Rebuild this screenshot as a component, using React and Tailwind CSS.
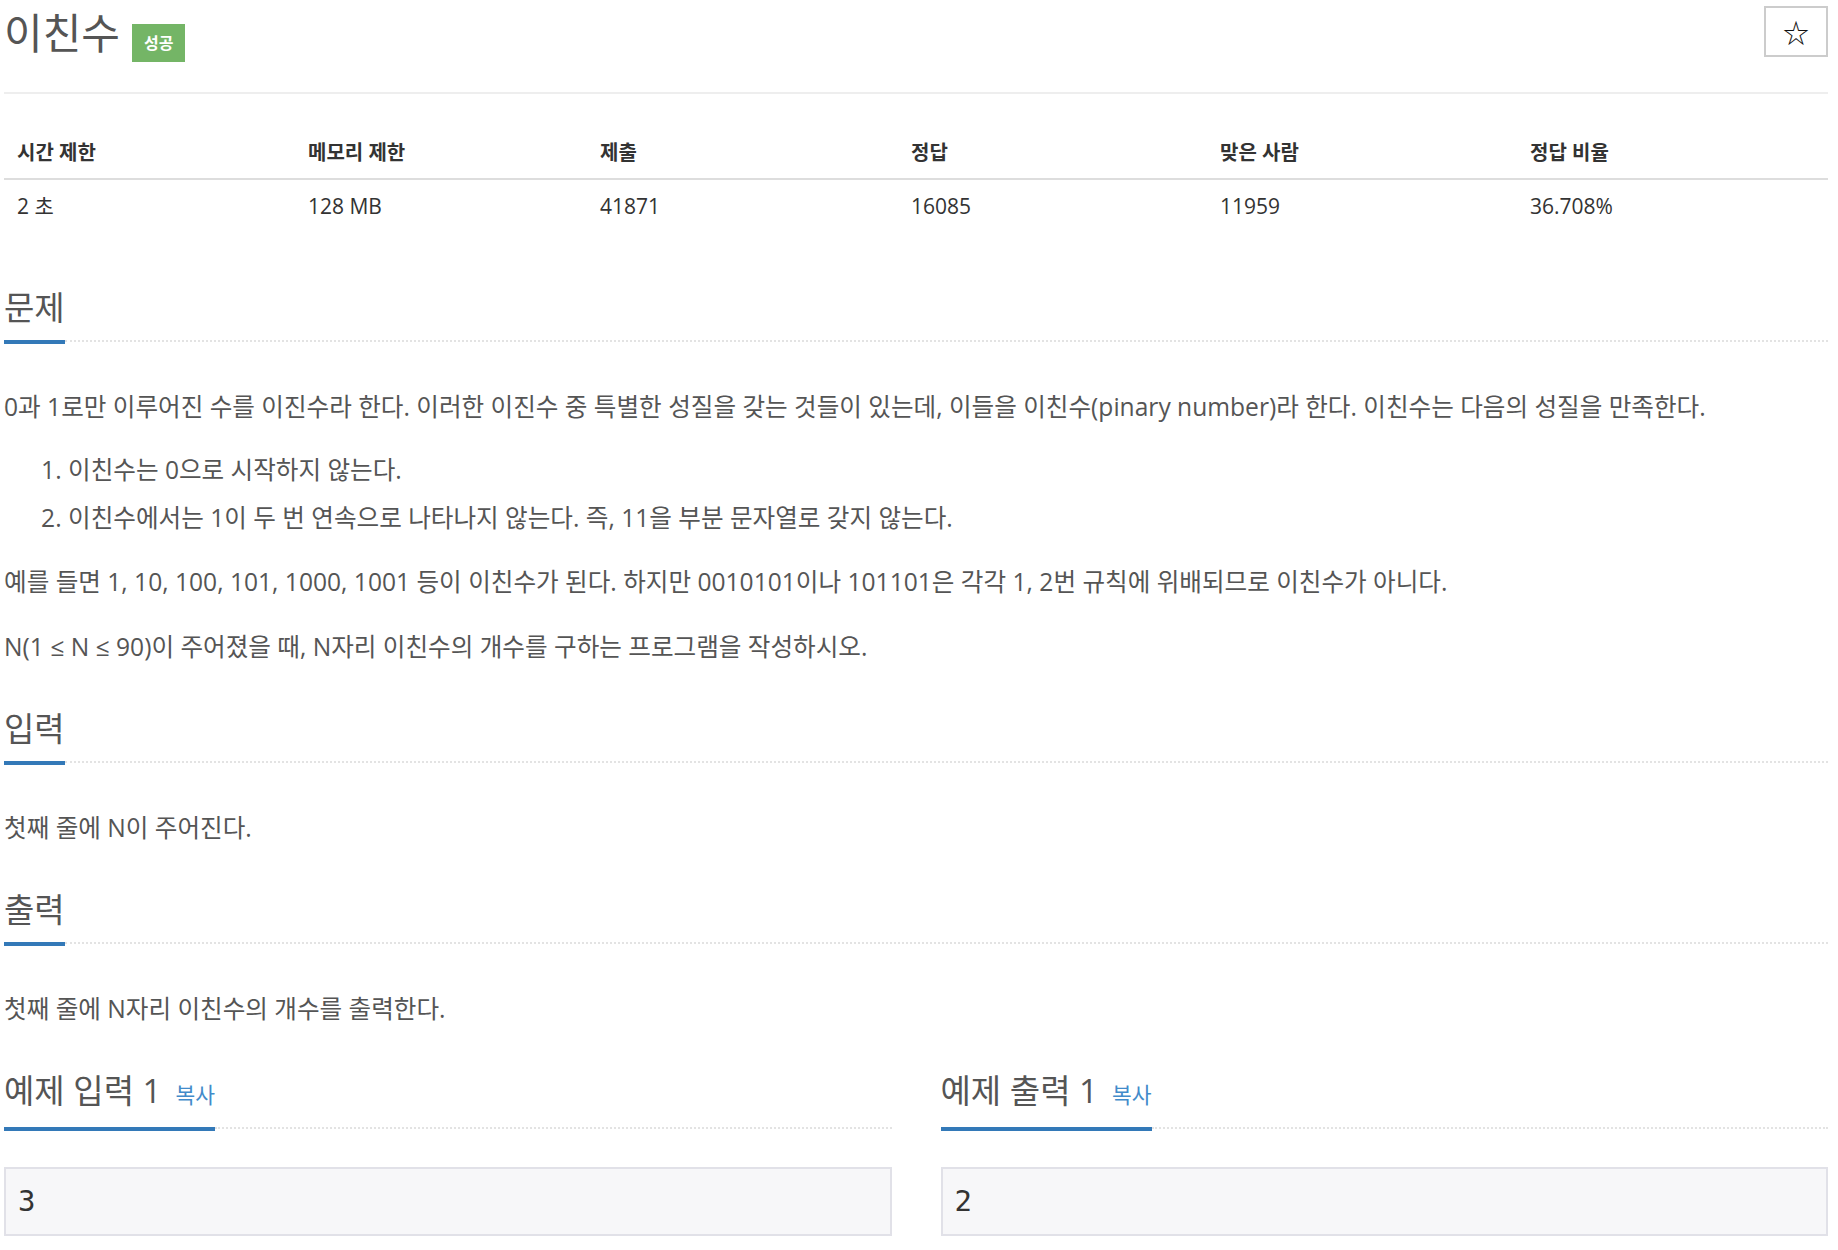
import React from "react";

const FONT = { fontFamily: '"Open Sans", "Noto Sans CJK KR", sans-serif' };

function Heading({ children, className = "" }) {
  return (
    <div className={"flex items-end " + className}>
      <div className="border-b-4 border-[#3379b8] pb-[11px] text-[33px] leading-[42px] text-[#555] whitespace-nowrap">
        {children}
      </div>
      <div className="flex-1 border-b-2 border-dotted border-[#e3e3e3] mb-[2px]"></div>
    </div>
  );
}

function SampleBox({ value }) {
  return (
    <div
      className="mt-[36px] h-[69px] border-2 border-[#e1e1e8] bg-[#f7f7f9] px-[12px] flex items-center text-[29px] text-[#333]"
      style={{ fontFamily: '"DejaVu Sans Mono", monospace' }}
    >
      {value}
    </div>
  );
}

export default function App() {
  const heads = ["시간 제한", "메모리 제한", "제출", "정답", "맞은 사람", "정답 비율"];
  const vals = ["2 초", "128 MB", "41871", "16085", "11959", "36.708%"];
  return (
    <div className="w-[1838px] min-h-[1250px] bg-white pl-[4px] pr-[10px]" style={FONT}>
      {/* Title */}
      <div className="flex justify-between items-start h-[94px] border-b-2 border-[#eee]">
        <div className="flex items-start">
          <h1 className="text-[42px] leading-[66px] text-[#555] font-normal">이친수</h1>
          <span className="ml-[12px] mt-[24px] h-[38px] px-[12px] flex items-center bg-[#74b566] text-white text-[16px] font-bold">
            성공
          </span>
        </div>
        <button
          className="mt-[6px] w-[64px] h-[51px] border-2 border-[#ccc] bg-white flex items-center justify-center text-[26px] text-[#111]"
          style={{ fontFamily: '"Noto Sans CJK KR", "DejaVu Sans", sans-serif' }}
        >
          ☆
        </button>
      </div>

      {/* Table */}
      <div className="mt-[34px]">
        <div className="grid grid-cols-[291px_292px_311px_309px_310px_1fr] h-[52px] items-center border-b-2 border-[#ddd] font-bold text-[20px] text-[#333]">
          {heads.map((h) => (
            <div key={h} className="pl-[13px]">{h}</div>
          ))}
        </div>
        <div className="grid grid-cols-[291px_292px_311px_309px_310px_1fr] h-[52px] pt-[2px] items-center text-[21px] text-[#333]">
          {vals.map((v) => (
            <div key={v} className="pl-[13px]">{v}</div>
          ))}
        </div>
      </div>

      {/* 문제 */}
      <Heading className="mt-[55px]">문제</Heading>
      <div className="text-[24.6px] leading-[34px] text-[#555]">
        <p className="mt-[46px]">
          0과 1로만 이루어진 수를 이진수라 한다. 이러한 이진수 중 특별한 성질을 갖는 것들이 있는데, 이들을 이친수(pinary number)라 한다. 이친수는 다음의 성질을 만족한다.
        </p>
        <ol className="mt-[29px] list-decimal pl-[64px]">
          <li>이친수는 0으로 시작하지 않는다.</li>
          <li className="mt-[14px]">이친수에서는 1이 두 번 연속으로 나타나지 않는다. 즉, 11을 부분 문자열로 갖지 않는다.</li>
        </ol>
        <p className="mt-[30px]">
          예를 들면 1, 10, 100, 101, 1000, 1001 등이 이친수가 된다. 하지만 0010101이나 101101은 각각 1, 2번 규칙에 위배되므로 이친수가 아니다.
        </p>
        <p className="mt-[31px]">N(1 ≤ N ≤ 90)이 주어졌을 때, N자리 이친수의 개수를 구하는 프로그램을 작성하시오.</p>
      </div>

      {/* 입력 */}
      <Heading className="mt-[44px]">입력</Heading>
      <p className="mt-[46px] text-[24.6px] leading-[34px] text-[#555]">첫째 줄에 N이 주어진다.</p>

      {/* 출력 */}
      <Heading className="mt-[44px]">출력</Heading>
      <p className="mt-[46px] text-[24.6px] leading-[34px] text-[#555]">첫째 줄에 N자리 이친수의 개수를 출력한다.</p>

      {/* 예제 */}
      <div className="grid grid-cols-2 gap-[49px] mt-[44px]">
        <div>
          <Heading>
            예제 입력 1<span className="ml-[14px] text-[21.5px] text-[#428bca]">복사</span>
          </Heading>
          <SampleBox value="3" />
        </div>
        <div>
          <Heading>
            예제 출력 1<span className="ml-[14px] text-[21.5px] text-[#428bca]">복사</span>
          </Heading>
          <SampleBox value="2" />
        </div>
      </div>
    </div>
  );
}
